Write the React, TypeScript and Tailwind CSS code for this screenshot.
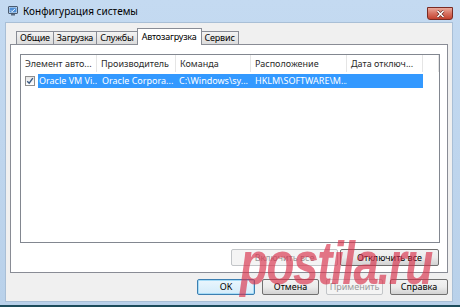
import React from "react";

const font = { fontFamily: '"Noto Sans", "Liberation Sans", sans-serif' };

function Tab({ label, active }: { label: string; active?: boolean }) {
  if (active) {
    return (
      <div className="relative z-10 -mb-px flex h-[17px] items-center border border-b-0 border-[#898c95] bg-white px-[4px] text-[9px] tracking-[-0.2px] text-black">
        {label}
      </div>
    );
  }
  return (
    <div className="-mr-px flex h-[13px] items-center border border-b-0 border-[#898c95] bg-gradient-to-b from-[#f3f3f3] to-[#dcdcdc] px-[3px] text-[9px] tracking-[-0.2px] text-black">
      {label}
    </div>
  );
}

function Btn({
  label,
  w,
  disabled,
  focused,
}: {
  label: string;
  w: string;
  disabled?: boolean;
  focused?: boolean;
}) {
  let cls =
    "flex h-[16px] items-center justify-center rounded-[2px] border text-[9px] ";
  if (disabled) cls += "border-[#c2c5c8] bg-[#f4f4f4] text-[#9a9a9a]";
  else if (focused)
    cls +=
      "border-[#3c7fb1] bg-gradient-to-b from-[#eaf6fd] to-[#d4ecfa] text-black shadow-[inset_0_0_0_1px_#a6dcf7]";
  else
    cls +=
      "border-[#707070] bg-gradient-to-b from-[#f2f2f2] via-[#ebebeb] to-[#d2d2d2] text-black";
  return <div className={cls + " " + w}>{label}</div>;
}

export default function App() {
  const headers = [
    "Элемент авто...",
    "Производитель",
    "Команда",
    "Расположение",
    "Дата отключ...",
    "",
  ];
  return (
    <div
      className="relative h-[307px] w-[460px] overflow-hidden bg-[#1d4c5b]"
      style={font}
    >
      <div className="flex h-[305px] flex-col bg-gradient-to-b from-[#c4daf1] to-[#b9d1ea]">
        {/* title bar */}
        <div className="relative flex h-[22px] items-center pl-[8px]">
          <svg width="10" height="10" viewBox="0 0 10 10">
            <rect x="0.5" y="0.5" width="9" height="7" rx="0.5" fill="#dfe8f3" stroke="#4a5b70" />
            <rect x="1.5" y="1.5" width="7" height="5" fill="#4f8fd6" />
            <rect x="3" y="8" width="4" height="1.5" fill="#5a6a7e" />
            <path d="M3 4.5l1.2 1.2L7 2.8" stroke="#ffffff" strokeWidth="1" fill="none" />
          </svg>
          <span className="ml-[5px] text-[10px] text-black">Конфигурация системы</span>
          <div className="absolute left-[427px] top-[7px] flex h-[13px] w-[26px] items-center justify-center rounded-b-[3px] border border-[#7a2b23] bg-gradient-to-b from-[#e9a99b] via-[#d7705f] to-[#c4412d]">
            <svg width="9" height="8" viewBox="0 0 9 8">
              <path d="M1.5 1l6 6M7.5 1l-6 6" stroke="#5a1d14" strokeWidth="2.6" />
              <path d="M1.5 1l6 6M7.5 1l-6 6" stroke="#ffffff" strokeWidth="1.6" />
            </svg>
          </div>
        </div>

        {/* client area */}
        <div className="mb-[3px] ml-[5px] mr-[7px] flex flex-1 flex-col border border-[#a9bfd6] bg-[#f0f0f0] px-[4px] pt-[5px]">
          <div className="flex items-end pl-[6px]">
            <Tab label="Общие" />
            <Tab label="Загрузка" />
            <Tab label="Службы" />
            <div className="-mr-px">
              <Tab label="Автозагрузка" active />
            </div>
            <Tab label="Сервис" />
          </div>

          <div className="flex h-[229px] flex-col border border-[#898c95] bg-white pl-[9px] pr-[7px] pt-[9px]">
            <div className="h-[189px] border border-[#828790] bg-white">
              <div className="grid h-[17px] grid-cols-[76px_79px_75px_96px_76px_1fr]">
                {headers.map((h, i) => (
                  <div
                    key={i}
                    className="flex items-center border-r border-[#e5e5e5] pl-[4px] text-[9px] text-[#2b2b2b]"
                  >
                    {h}
                  </div>
                ))}
              </div>
              <div className="mt-[2px] grid h-[14px] grid-cols-[76px_79px_75px_96px_76px_1fr] text-[9px] text-white">
                <div className="flex items-center">
                  <div className="ml-[4px] mr-[3px] flex h-[10px] w-[10px] items-center justify-center border border-[#8f8f8f] bg-gradient-to-b from-[#e6e6e6] to-[#ffffff]">
                    <svg width="8" height="8" viewBox="0 0 8 8">
                      <path d="M1.2 4.2l2 2L6.8 1.2" stroke="#3b5a82" strokeWidth="1.4" fill="none" />
                    </svg>
                  </div>
                  <div className="flex h-full flex-1 items-center overflow-hidden whitespace-nowrap bg-[#3399ff] pl-[1px]">
                    Oracle VM Vi...
                  </div>
                </div>
                <div className="flex items-center whitespace-nowrap bg-[#3399ff] pl-[5px]">Oracle Corpora...</div>
                <div className="flex items-center whitespace-nowrap bg-[#3399ff] pl-[3px]">C:\Windows\sy...</div>
                <div className="flex items-center whitespace-nowrap bg-[#3399ff] pl-[4px]">HKLM\SOFTWARE\M...</div>
                <div className="bg-[#3399ff]" />
                <div />
              </div>
            </div>
            <div className="mt-[6px] flex justify-end gap-[2px] pr-[1px]">
              <Btn label="Включить все" w="w-[107px] h-[17px]" disabled />
              <Btn label="Отключить все" w="w-[99px] h-[17px]" />
            </div>
          </div>

          <div className="mt-[6px] flex justify-end gap-[7px] pr-[0px]">
            <Btn label="OK" w="w-[58px]" focused />
            <Btn label="Отмена" w="w-[57px]" />
            <Btn label="Применить" w="w-[57px]" disabled />
            <Btn label="Справка" w="w-[58px]" />
          </div>
        </div>
      </div>

      {/* watermark */}
      <div
        className="pointer-events-none absolute left-[240px] top-[232px] origin-left scale-x-[0.74] text-[62px] font-bold italic leading-none tracking-[-2px] text-[#d9304a] opacity-65"
        style={{ fontFamily: '"Liberation Sans", sans-serif' }}
      >
        postila.ru
      </div>
    </div>
  );
}
